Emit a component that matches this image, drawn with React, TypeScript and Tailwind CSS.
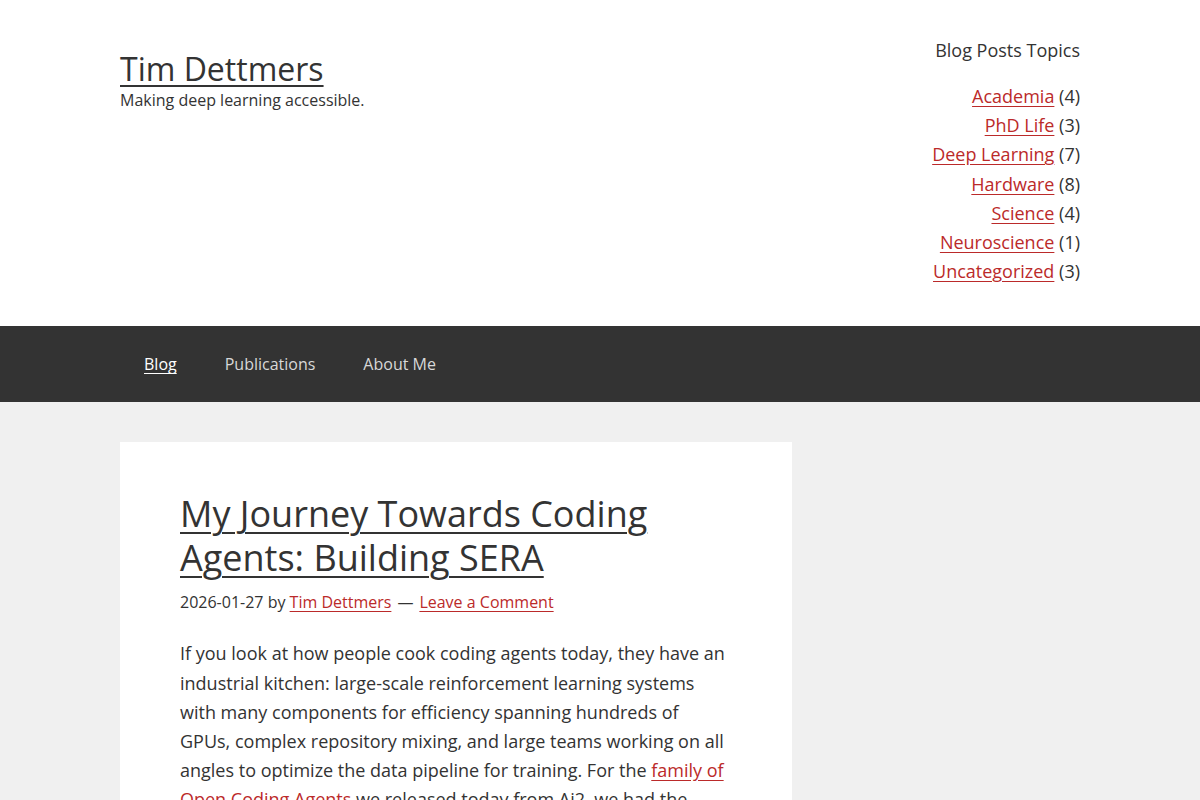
import React from 'react';

const topics: [string, number][] = [
  ['Academia', 4],
  ['PhD Life', 3],
  ['Deep Learning', 7],
  ['Hardware', 8],
  ['Science', 4],
  ['Neuroscience', 1],
  ['Uncategorized', 3],
];

const navItems = ['Blog', 'Publications', 'About Me'];

export default function App() {
  return (
    <div
      className="min-h-screen bg-[#f0f0f0] text-[#333] antialiased"
      style={{ fontFamily: '"Open Sans", "Noto Sans", sans-serif' }}
    >
      {/* site header */}
      <header className="bg-white">
        <div className="mx-auto flex w-[960px] items-start justify-between pt-[40px] pb-[40px]">
          <div className="pt-[8px]">
            <a href="#" className="block text-[32px] leading-[42px] text-[#333] underline decoration-2 underline-offset-[4px]">
              Tim Dettmers
            </a>
            <p className="text-[16px] leading-[20px]">Making deep learning accessible.</p>
          </div>
          <aside className="text-right text-[18px]">
            <h2 className="leading-[20px]">Blog Posts Topics</h2>
            <ul className="mt-[22px] leading-[29.2px]">
              {topics.map(([name, count]) => (
                <li key={name}>
                  <a href="#" className="text-[#bb2a2a] underline underline-offset-[3px]">
                    {name}
                  </a>{' '}
                  ({count})
                </li>
              ))}
            </ul>
          </aside>
        </div>
      </header>

      {/* main navigation */}
      <nav className="bg-[#333]">
        <ul className="mx-auto flex w-[960px]">
          {navItems.map((item, i) => (
            <li key={item}>
              <a
                href="#"
                className={`block px-[24px] text-[16px] leading-[76px] ${
                  i === 0 ? 'text-white underline underline-offset-[3px]' : 'text-[#d8d8d8]'
                }`}
              >
                {item}
              </a>
            </li>
          ))}
        </ul>
      </nav>

      {/* content */}
      <main className="mx-auto w-[960px] pt-[40px]">
        <article className="w-[672px] bg-white px-[60px] pt-[50px] pb-[40px]">
          <h1 className="text-[36px] leading-[44px]">
            <a href="#" className="underline decoration-2 underline-offset-[5px]">
              My Journey Towards Coding Agents: Building SERA
            </a>
          </h1>
          <div className="mt-[10px] text-[16px] leading-[24px]">
            2026-01-27 by{' '}
            <a href="#" className="text-[#bb2a2a] underline underline-offset-[3px]">
              Tim Dettmers
            </a>
            <span className="mx-[6px]">—</span>
            <a href="#" className="text-[#bb2a2a] underline underline-offset-[3px]">
              Leave a Comment
            </a>
          </div>
          <p className="mt-[25px] text-[18px] leading-[29.2px]">
            If you look at how people cook coding agents today, they have an industrial kitchen: large-scale
            reinforcement learning systems with many components for efficiency spanning hundreds of GPUs, complex
            repository mixing, and large teams working on all angles to optimize the data pipeline for training. For
            the{' '}
            <a href="#" className="text-[#bb2a2a] underline underline-offset-[3px]">
              family of Open Coding Agents
            </a>{' '}
            we released today from Ai2, we had the equivalent of a hot plate and a frying pan: 32 GPUs and five
            bright-eyed researchers who wanted to cook state-of-the-art coding agents.
          </p>
        </article>
      </main>
    </div>
  );
}
